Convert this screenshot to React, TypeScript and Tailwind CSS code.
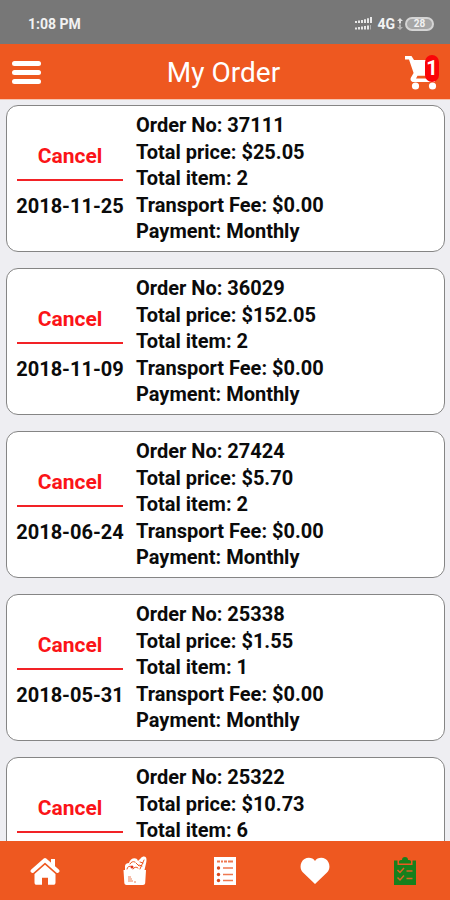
import { useState } from 'react'

type Order = {
  no: string
  total: string
  items: number
  fee: string
  payment: string
  date: string
}

const initialOrders: Order[] = [
  { no: '37111', total: '$25.05', items: 2, fee: '$0.00', payment: 'Monthly', date: '2018-11-25' },
  { no: '36029', total: '$152.05', items: 2, fee: '$0.00', payment: 'Monthly', date: '2018-11-09' },
  { no: '27424', total: '$5.70', items: 2, fee: '$0.00', payment: 'Monthly', date: '2018-06-24' },
  { no: '25338', total: '$1.55', items: 1, fee: '$0.00', payment: 'Monthly', date: '2018-05-31' },
  { no: '25322', total: '$10.73', items: 6, fee: '$0.00', payment: 'Monthly', date: '2018-05-31' },
]

function SignalIcon() {
  return (
    <svg width="18" height="14" viewBox="0 0 18 14" fill="#e8e8e8" aria-hidden="true">
      <path d="M0 4h2v2H0zM3 3.5h2V6H3zM6 3h2v3H6zM9 2.2h2V6H9zM12 1.2h2V6h-2zM15 0h2v6h-2z" />
      <path d="M0 10.5h2v2H0zM3 10h2v2.5H3zM6 9.5h2v3H6zM9 9h2v3.5H9zM12 8.5h2v4h-2z" />
      <path d="M15 8h1v4.500h-1z" opacity="0.5" />
    </svg>
  )
}

function DataIcon() {
  return (
    <svg width="6" height="12" viewBox="0 0 6 12" fill="#e0e0e0" aria-hidden="true">
      <path d="M3 0l3 3H4v2.500H2V3H0z" />
      <path d="M2 6.500h2V9h2l-3 3-3-3h2z" opacity="0.6" />
    </svg>
  )
}

function CartIcon() {
  return (
    <svg width="34" height="36" viewBox="0 0 34 36" fill="#fff" aria-hidden="true">
      <path d="M0 1h6.500L9 5h23v2l-5.500 12c-.6 1.200-1.500 1.800-2.700 1.800H12.500L11 23.500h19V27H8.500c-2.600 0-3.600-2.500-2.500-4.500l2.600-4.500L4 4.500H0z" />
      <circle cx="10.500" cy="31" r="3.600" />
      <circle cx="27.500" cy="31" r="3.600" />
    </svg>
  )
}

function HomeIcon() {
  return (
    <svg width="30" height="28" viewBox="0 0 30 28" aria-hidden="true">
      <path d="M21 2h4v8l-4-4z" fill="#fff" />
      <path d="M2.500 14L15 3l12.500 11" fill="none" stroke="#fff" strokeWidth="3.800" strokeLinecap="round" strokeLinejoin="round" />
      <path d="M15 7.800l10.500 9.200V25.500c0 1.400-.8 2.300-2.200 2.300H18v-7h-6v7H6.700c-1.400 0-2.200-.9-2.200-2.300V17z" fill="#fff" />
    </svg>
  )
}

function GroceryIcon() {
  return (
    <svg width="26" height="30" viewBox="0 0 26 30" fill="none" aria-hidden="true">
      <path d="M3 14V10c0-2 2-3 4-3 1-4 5-6 8-4l1 2 3-3c1-1.500 4-2 5-.5.800 1.500.5 4 0 6L22.500 14z" fill="#fff" />
      <path d="M5 13a3 3 0 0 1 5-2M8 8c1-2 3-3 5-2M11 13a3 3 0 0 1 5-1M14 7l3 3M18 13l4-9M18 6l3 1M17 9l3 1" stroke="#ee5820" strokeWidth="1" strokeLinecap="round" />
      <circle cx="10" cy="11" r="1.500" fill="#e0341c" />
      <path d="M1.500 14h22.500l-.800 13c-.1 1.200-1 2-2.200 2H4.500c-1.200 0-2-.8-2.200-2z" fill="#fff" />
      <path d="M6 21h3M6 23h4M6 25h5M12 26h2" stroke="#ee8058" strokeWidth="1.200" />
    </svg>
  )
}

function ListIcon() {
  return (
    <svg width="24" height="30" viewBox="0 0 24 30" aria-hidden="true">
      <path d="M1 1h22v28H1z" fill="#fff" />
      <path d="M4 5.500h3M8 5.500h2M11 5.500h3M15 5.500h5" stroke="#ee7850" strokeWidth="2" />
      <path d="M10 12h10M10 18.500h10M10 24.500h10" stroke="#ee7850" strokeWidth="1.500" />
      <g fill="#d8481c">
        <circle cx="5.500" cy="12" r="1.700" />
        <circle cx="5.500" cy="18.500" r="1.700" />
        <circle cx="5.500" cy="24.500" r="1.700" />
      </g>
    </svg>
  )
}

function HeartIcon() {
  return (
    <svg width="30" height="28" viewBox="0 0 30 28" aria-hidden="true">
      <path d="M15 27L3 15.500C-1 11.500.2 4.500 4.500 2 8.500-.3 13 1 15 4 17 1 21.500-.3 25.500 2 29.800 4.500 31 11.500 27 15.500z" fill="#fff" />
    </svg>
  )
}

function OrdersIcon() {
  return (
    <svg width="22" height="28" viewBox="0 0 22 28" aria-hidden="true">
      <path d="M0 3.500h3.500v4.500h15V3.500H22V28H0z" fill="#16801c" />
      <path d="M5 6.500V4.500c0-1 1-1.500 3-1.500 0-2 1-3 3-3s3 1 3 3c2 0 3 .5 3 1.500v2z" fill="#16801c" />
      <path d="M3.500 13l2.500 2.500L10 11M3.500 20.500L6 23l4-4.500M12.500 14h6M12.500 21.500h6" fill="none" stroke="#dc6424" strokeWidth="1.500" />
    </svg>
  )
}

const tabs = [
  { label: 'Home', icon: <HomeIcon /> },
  { label: 'Groceries', icon: <GroceryIcon /> },
  { label: 'List', icon: <ListIcon /> },
  { label: 'Favorites', icon: <HeartIcon /> },
  { label: 'Orders', icon: <OrdersIcon /> },
]

function OrderCard({ order, onCancel }: { order: Order; onCancel: () => void }) {
  return (
    <li className="flex min-h-[147px] gap-[11px] rounded-xl border border-[#858585] bg-white px-2 pt-[6px] pb-[7px] text-xl leading-[26px] font-bold text-[#0b0b0b]">
      <div className="flex w-[110px] shrink-0 flex-col items-center justify-center pt-[6px]">
        <button type="button" className="w-full pb-[10px] text-[21px] text-[#fb1418]" onClick={onCancel}>
          Cancel
        </button>
        <div className="h-[2px] w-[106px] bg-[#f22226]" />
        <time className="pt-3 whitespace-nowrap" dateTime={order.date}>{order.date}</time>
      </div>
      <div className="flex min-w-0 flex-1 flex-col justify-between">
        <p>Order No: {order.no}</p>
        <p>Total price: {order.total}</p>
        <p>Total item: {order.items}</p>
        <p>Transport Fee: {order.fee}</p>
        <p>Payment: {order.payment}</p>
      </div>
    </li>
  )
}

export default function App() {
  const [orders, setOrders] = useState(initialOrders)

  return (
    <div className="flex h-dvh flex-col bg-[#eeeef2] font-['Roboto',sans-serif]">
      <div className="flex h-11 shrink-0 items-center justify-between bg-[#777777] pt-1 pr-4 pl-7 text-sm font-bold text-[#f2f2f2]">
        <span>1:08 PM</span>
        <div className="flex items-center gap-[2px]">
          <SignalIcon />
          <span className="pl-[2px]">4G</span>
          <DataIcon />
          <span className="flex h-[14px] w-[29px] items-center justify-center rounded-full border-2 border-[#d4d4d4] bg-[#a6a6a6] text-[10px] leading-none">
            28
          </span>
        </div>
      </div>

      <header className="grid h-14 shrink-0 grid-cols-[40px_1fr_40px] items-center border-b border-[#f5c4b0] bg-[#ee5820] pt-[2px] pr-[11px] pl-2">
        <button type="button" aria-label="Menu" className="flex w-9 flex-col items-center gap-1">
          <span className="h-[5px] w-[29px] rounded-sm bg-white" />
          <span className="h-[5px] w-[29px] rounded-sm bg-white" />
          <span className="h-[5px] w-[29px] rounded-sm bg-white" />
        </button>
        <h1 className="text-center text-[28px] leading-8 text-white">My Order</h1>
        <button type="button" aria-label="Cart, 1 item" className="relative justify-self-end">
          <CartIcon />
          <span className="absolute top-0 right-0 flex h-[27px] w-[14px] items-center justify-center rounded-full bg-[#fa0508] text-xl leading-none font-bold text-white">
            1
          </span>
        </button>
      </header>

      <main className="min-h-0 flex-1 overflow-y-auto pt-[5px] pr-[5px] pb-4 pl-[6px] [scrollbar-width:none]">
        <ul className="flex flex-col gap-4">
          {orders.map((order) => (
            <OrderCard
              key={order.no}
              order={order}
              onCancel={() => setOrders(orders.filter((item) => item.no !== order.no))}
            />
          ))}
        </ul>
      </main>

      <nav className="grid h-[59px] shrink-0 grid-cols-5 bg-[#ee5820]">
        {tabs.map((tab) => (
          <a key={tab.label} href={`#${tab.label.toLowerCase()}`} aria-label={tab.label} className="flex items-center justify-center">
            {tab.icon}
          </a>
        ))}
      </nav>
    </div>
  )
}
